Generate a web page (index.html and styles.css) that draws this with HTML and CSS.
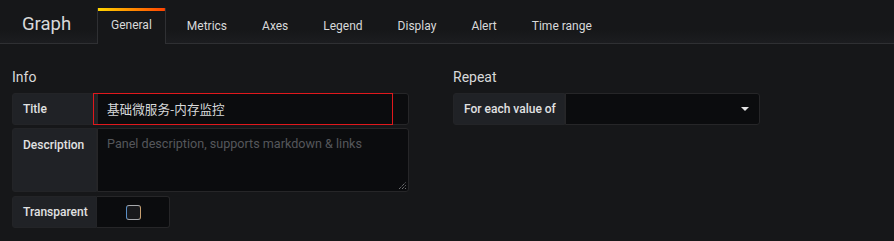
FILE: index.html
```html
<!DOCTYPE html>
<html lang="en">
<head>
<meta charset="utf-8">
<link rel="stylesheet" href="styles.css">
</head>
<body>
<div class="header">
  <div class="title">Graph</div>
  <div class="tabs">
    <div class="tab active">General</div>
    <div class="tab">Metrics</div>
    <div class="tab">Axes</div>
    <div class="tab">Legend</div>
    <div class="tab">Display</div>
    <div class="tab">Alert</div>
    <div class="tab">Time range</div>
  </div>
</div>
<div class="content">
  <div class="section info">
    <h5 class="section-heading">Info</h5>
    <div class="form-row">
      <div class="label">Title</div>
      <div class="input input-title">基础微服务-内存监控</div>
      <div class="annot"></div>
    </div>
    <div class="form-row tall">
      <div class="label label-top">Description</div>
      <div class="input textarea">
        <span class="placeholder">Panel description, supports markdown &amp; links</span>
        <svg class="grip" width="9" height="9" viewBox="0 0 9 9"><path d="M1 8L8 1M4 8L8 4M7 8L8 7" stroke="#9a9b9d" stroke-width="1" stroke-dasharray="1 1" fill="none"/></svg>
      </div>
    </div>
    <div class="form-row">
      <div class="label">Transparent</div>
      <div class="check-wrap"><span class="checkbox"></span></div>
    </div>
  </div>
  <div class="section repeat">
    <h5 class="section-heading">Repeat</h5>
    <div class="form-row">
      <div class="label label-wide">For each value of</div>
      <div class="input select"><span class="caret"></span></div>
    </div>
  </div>
</div>
</body>
</html>
```
FILE: styles.css
```css
html, body {
  margin: 0;
  padding: 0;
  background: #161719;
  font-family: Roboto, "Noto Sans CJK SC", sans-serif;
  color: #d8d9da;
}
.header {
  display: flex;
  height: 43px;
  border-bottom: 1px solid #2f3033;
  padding-left: 22px;
  background: linear-gradient(#161719 70%, #1c1d20);
}
.title {
  width: 49px;
  font-size: 18.5px;
  line-height: 49px;
  color: #d8d9da;
  white-space: nowrap;
}
.tabs {
  display: flex;
  gap: 7px;
  margin-left: 26px;
  align-self: flex-end;
}
.tab {
  height: 35px;
  padding: 0 13px;
  border: 1px solid transparent;
  border-bottom: none;
  box-sizing: border-box;
  font-size: 12px;
  line-height: 34px;
  color: #d8d9da;
  white-space: nowrap;
}
.tab.active {
  height: 36px;
  margin-bottom: -1px;
  border-color: #2f3033;
  border-top: none;
  padding-top: 3px;
  line-height: 29px;
  background: linear-gradient(90deg, #ffd500, #ff4400) top / 100% 3px no-repeat, #161719;
}
.content {
  display: flex;
  gap: 44px;
  padding: 0 12px;
}
.section-heading {
  margin: 0;
  padding-top: 23px;
  height: 26px;
  font-size: 14px;
  font-weight: 400;
  line-height: 20px;
}
.info { width: 397px; }
.form-row {
  position: relative;
  display: flex;
  height: 32px;
  margin-bottom: 3px;
}
.form-row.tall { height: 64px; margin-bottom: 4px; }
.label {
  width: 85px;
  flex: none;
  box-sizing: border-box;
  padding: 0 10px;
  background: #202226;
  border: 1px solid #232427;
  border-radius: 3px 0 0 3px;
  font-size: 12px;
  font-weight: 500;
  line-height: 30px;
  color: #e0e1e2;
  white-space: nowrap;
}
.label-top { line-height: 32px; }
.label-wide { width: 112px; }
.input {
  flex: 1;
  box-sizing: border-box;
  background: #0b0c0e;
  border: 1px solid #262628;
  border-radius: 0 3px 3px 0;
  padding: 0 9px;
  font-size: 12.6px;
  line-height: 30px;
  color: #d8d9da;
}
.input-title { font-family: "Noto Sans CJK SC", Roboto, sans-serif; }
.textarea {
  position: relative;
  line-height: 30px;
}
.placeholder {
  font-size: 12.6px;
  color: #55575b;
}
.grip {
  position: absolute;
  right: 1px;
  bottom: 1px;
}
.annot {
  position: absolute;
  left: 81px;
  top: 0;
  width: 300px;
  height: 32px;
  box-sizing: border-box;
  border: 1px solid #e0181c;
}
.check-wrap {
  width: 72px;
  display: flex;
  align-items: center;
  justify-content: center;
  background: #0b0c0e;
  border: 1px solid #262628;
  border-left: none;
  border-radius: 0 3px 3px 0;
}
.checkbox {
  width: 15px;
  height: 15px;
  box-sizing: border-box;
  border-radius: 3px;
  border: 1px solid #a6a8ac;
  border-left-color: #5a8fc6;
  border-right-color: #c8a070;
  background: #18191c;
}
.repeat { width: 307px; }
.select {
  flex: none;
  width: 195px;
  position: relative;
}
.caret {
  position: absolute;
  right: 10px;
  top: 13px;
  width: 0;
  height: 0;
  border-left: 4px solid transparent;
  border-right: 4px solid transparent;
  border-top: 4px solid #e3e3e3;
}
```
